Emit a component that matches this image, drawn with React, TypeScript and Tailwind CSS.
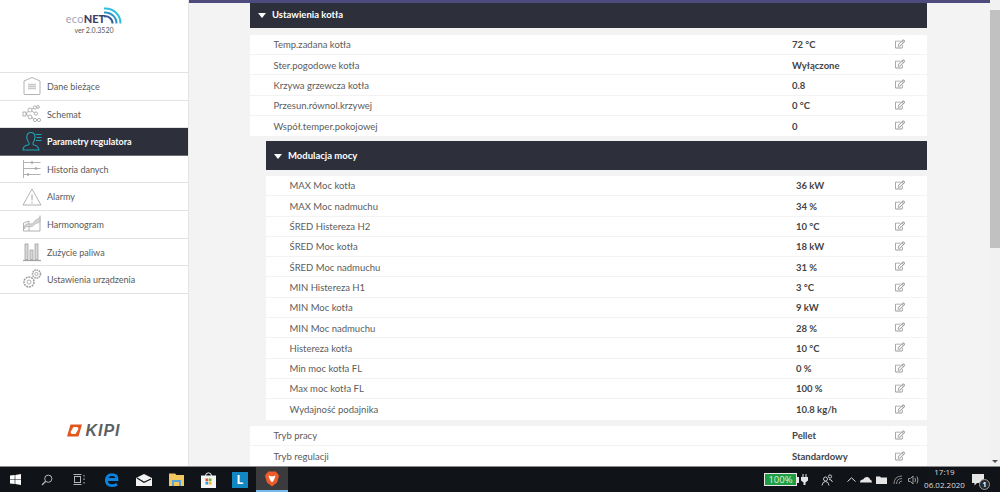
import { FaRegEdit } from "react-icons/fa";

const boilerRows = [
  ["Temp.zadana kotła", "72 °C"],
  ["Ster.pogodowe kotła", "Wyłączone"],
  ["Krzywa grzewcza kotła", "0.8"],
  ["Przesun.równol.krzywej", "0 °C"],
  ["Współ.temper.pokojowej", "0"],
];

const powerRows = [
  ["MAX Moc kotła", "36 kW"],
  ["MAX Moc nadmuchu", "34 %"],
  ["ŚRED Histereza H2", "10 °C"],
  ["ŚRED Moc kotła", "18 kW"],
  ["ŚRED Moc nadmuchu", "31 %"],
  ["MIN Histereza H1", "3 °C"],
  ["MIN Moc kotła", "9 kW"],
  ["MIN Moc nadmuchu", "28 %"],
  ["Histereza kotła", "10 °C"],
  ["Min moc kotła FL", "0 %"],
  ["Max moc kotła FL", "100 %"],
  ["Wydajność podajnika", "10.8 kg/h"],
];

const modeRows = [
  ["Tryb pracy", "Pellet"],
  ["Tryb regulacji", "Standardowy"],
];

function NavIcon({ name, color }: { name: string; color: string }) {
  const common = { fill: "none", stroke: color, strokeWidth: 0.8 };
  return (
    <svg width="20" height="20" viewBox="0 0 20 20" {...common}>
      {name === "dane" && (
        <>
          <path d="M2 5 L10 1.5 L18 5 V17.5 Q18 18.5 17 18.5 H3 Q2 18.5 2 17.5 Z" />
          <path d="M6 8.5h8M6 10.5h8M6 12.5h8" strokeWidth="1.4" stroke="#c8c8c8" />
        </>
      )}
      {name === "schemat" && (
        <>
          <rect x="1" y="8" width="3" height="4" />
          <circle cx="8" cy="6" r="2" />
          <circle cx="8" cy="13" r="2" />
          <circle cx="13" cy="3.5" r="1.6" />
          <circle cx="16" cy="3" r="1.4" />
          <circle cx="14" cy="9.5" r="1.6" />
          <circle cx="13" cy="16" r="1.6" />
          <circle cx="17" cy="16" r="1.6" />
          <path d="M4 10 L6.5 7M4 10 L6.5 12M9.6 5 L11.6 4M9.8 7 L12.6 9M9.8 13 L11.5 15.4" />
        </>
      )}
      {name === "parametry" && (
        <>
          <path d="M1 19 Q1 14.5 6 14 Q7.6 13.4 7 12 Q4.8 9.5 4.8 6 Q5 1.5 9 1.5 Q12.5 1.5 13 5.5 Q13 9.5 11 12 Q10.5 13.5 12 14 Q16 14.5 17 19 Z" strokeWidth="1.1" />
          <path d="M13.5 3.5h6M14.5 6.5h5M14 9.5h5.5" strokeWidth="1.1" />
        </>
      )}
      {name === "historia" && (
        <>
          <path d="M1.5 1v18M1.5 3.5h17M1.5 9.5h17M1.5 15.5h17" />
          <circle cx="10" cy="3.5" r="1" />
          <circle cx="14" cy="9.5" r="1" />
          <circle cx="6" cy="15.5" r="1" />
        </>
      )}
      {name === "alarmy" && (
        <>
          <path d="M10 2 L19 18 H1 Z" />
          <path d="M10 7.5v6M10 15v1.4" strokeWidth="1" />
        </>
      )}
      {name === "harmonogram" && (
        <>
          <path d="M1.5 9 L7 7 V17 H1.5 Z M7 17 H18 V1.5" />
          <path d="M2 12 Q5 8.5 8 10 Q11 10.5 13 6.5 L18 3.5 V8 L13 10 Q10 14 7 12.5 Q4 12 2 15 Z" fill="#d5d5d5" strokeWidth="0.5" />
        </>
      )}
      {name === "zuzycie" && (
        <>
          <rect x="3" y="2" width="3" height="15.5" fill="#d8d8d8" />
          <rect x="8" y="8" width="3" height="9.5" fill="#d8d8d8" />
          <rect x="13" y="2" width="3" height="15.5" fill="#d8d8d8" />
          <path d="M1 18.5h18" strokeWidth="1.2" />
        </>
      )}
      {name === "ustawienia" && (
        <>
          <circle cx="7" cy="13" r="5" strokeDasharray="2 0.8" strokeWidth="1.6" />
          <circle cx="7" cy="13" r="2" />
          <circle cx="14.5" cy="5" r="4" strokeDasharray="1.6 0.7" strokeWidth="1.5" />
          <circle cx="14.5" cy="5" r="1.6" />
        </>
      )}
    </svg>
  );
}

const navItems = [
  { name: "dane", label: "Dane bieżące" },
  { name: "schemat", label: "Schemat" },
  { name: "parametry", label: "Parametry regulatora", active: true },
  { name: "historia", label: "Historia danych" },
  { name: "alarmy", label: "Alarmy" },
  { name: "harmonogram", label: "Harmonogram" },
  { name: "zuzycie", label: "Zużycie paliwa" },
  { name: "ustawienia", label: "Ustawienia urządzenia" },
];

function Sidebar() {
  return (
    <div className="w-[189px] shrink-0 bg-white border-r border-[#e4e4e4] flex flex-col">
      {/* logo */}
      <div className="h-[72px] flex flex-col items-center pt-[5px]">
        <div className="flex items-end h-[20px]">
          <span className="text-[11px] leading-[12px] text-[#a5a3b8] tracking-[0.2px]">eco</span>
          <span className="text-[11px] leading-[12px] font-black text-[#3d4066]">NET</span>
          <svg width="19" height="18" viewBox="0 0 19 18" className="-ml-[2px] mb-[1px]" fill="none">
            <path d="M1 2.5 A15 15 0 0 1 17.5 17.5" stroke="#2fc0e0" strokeWidth="2" />
            <path d="M1 6.5 A11 11 0 0 1 13.5 17.5" stroke="#2a96c8" strokeWidth="2" />
            <path d="M1 10.5 A7 7 0 0 1 9.5 17.5" stroke="#34588f" strokeWidth="2" />
          </svg>
        </div>
        <span className="text-[7px] leading-[10px] text-[#555]">ver 2.0.3520</span>
      </div>

      <div className="border-t border-[#e2e2e2]">
        {navItems.map((item) => (
          <div
            key={item.name}
            className={`h-[27.6px] flex items-center pl-[22px] gap-[5px] border-b ${
              item.active
                ? "bg-[#2d303b] border-[#6b6d75] text-white font-bold"
                : "bg-white border-[#e2e2e2] text-[#5a5a5a]"
            }`}
          >
            <NavIcon name={item.name} color={item.active ? "#1fa3b3" : "#a0a0a0"} />
            <span className="text-[9px] pt-[1px]">{item.label}</span>
          </div>
        ))}
      </div>

      <div className="flex-1 flex items-end justify-center pb-[28px]">
        <div className="flex items-center gap-[3px]">
          <svg width="15" height="13" viewBox="0 0 15 13">
            <path d="M3.5 0.5 H15 L11.5 12.5 H0 Z" fill="#e2571e" />
            <path d="M6.5 3 H10.5 L11.5 5 L8.5 10 H4.5 L3.5 8 Z" fill="#fff" />
          </svg>
          <span className="text-[16px] leading-[15px] font-black italic text-[#5d5f63] tracking-[1px] font-['Liberation_Sans',sans-serif]">
            KIPI
          </span>
        </div>
      </div>
    </div>
  );
}

function Row({ label, value, nested }: { label: string; value: string; nested?: boolean }) {
  return (
    <div className={`flex items-center bg-white border-b border-[#f3f3f3] last:border-b-0 text-[9.5px] ${nested ? "h-[20.3px]" : "h-[20.2px]"}`}>
      <span className={`text-[#5c5c5c] pt-[2px] ${nested ? "w-[530px] pl-[23.5px]" : "w-[542px] pl-[23.5px]"}`}>{label}</span>
      <span className={`text-[#444] font-bold pt-[2px] ${nested ? "w-[99px]" : "w-[102.5px]"}`}>{value}</span>
      <FaRegEdit className="text-[10px] text-[#999] -mt-[1px]" />
    </div>
  );
}

function SectionHeader({ title, className }: { title: string; className: string }) {
  return (
    <div className={`bg-[#2d303b] text-white font-bold text-[9.5px] flex items-center ${className}`}>
      <span className="w-0 h-0 border-x-[4px] border-x-transparent border-t-[5px] border-t-white mr-[6px]" />
      {title}
    </div>
  );
}

function Content() {
  return (
    <div className="flex-1 min-w-0 bg-[#f3f3f3] overflow-hidden">
      <div className="h-[3px] bg-[#4d4a7d]" />
      <div className="ml-[61px] w-[677px]">
        <SectionHeader title="Ustawienia kotła" className="h-[25px] pl-[8px]" />
        <div className="mt-[7px]">
          {boilerRows.map(([label, value]) => (
            <Row key={label} label={label} value={value} />
          ))}
        </div>
        <div className="ml-[16px] mt-[5px]">
          <SectionHeader title="Modulacja mocy" className="h-[29px] pl-[8px] pt-[2px]" />
          <div className="mt-[6px]">
            {powerRows.map(([label, value]) => (
              <Row key={label} label={label} value={value} nested />
            ))}
          </div>
        </div>
        <div className="mt-[6.5px]">
          {modeRows.map(([label, value]) => (
            <Row key={label} label={label} value={value} />
          ))}
        </div>
      </div>
    </div>
  );
}

function Scrollbar() {
  return (
    <div className="w-[10px] shrink-0 bg-[#f1f1f1] flex flex-col">
      <div className="h-[10px]" />
      <div className="h-[238px] bg-[#c1c1c1]" />
      <div className="flex-1 flex items-end justify-center pb-[3px]">
        <span className="w-0 h-0 border-x-[3px] border-x-transparent border-t-[3px] border-t-[#505050]" />
      </div>
    </div>
  );
}

function TaskButton({ children, active }: { children: React.ReactNode; active?: boolean }) {
  return (
    <div
      className={`w-[32px] h-full flex items-center justify-center ${
        active ? "bg-[#3b3b3d] border-b-2 border-[#76b9ed]" : ""
      }`}
    >
      {children}
    </div>
  );
}

function Taskbar() {
  return (
    <div className="h-[26px] shrink-0 bg-[#101318] border-t border-[#8a8a8a] flex items-center text-white font-['Open_Sans',sans-serif]">
      <div className="flex h-full -ml-[1px]">
        <TaskButton>
          <svg width="11" height="11" viewBox="0 0 11 11" fill="#fff">
            <path d="M0 1.6 L4.7 1 V5.2 H0 Z M5.3 0.9 L11 0 V5.2 H5.3 Z M0 5.8 H4.7 V10 L0 9.4 Z M5.3 5.8 H11 V11 L5.3 10.1 Z" />
          </svg>
        </TaskButton>
        <TaskButton>
          <svg width="12" height="12" viewBox="0 0 12 12" fill="none" stroke="#b5b5b5" strokeWidth="1">
            <circle cx="7.3" cy="4.7" r="3.6" />
            <path d="M4.7 7.3 L1 11" strokeWidth="1.3" />
          </svg>
        </TaskButton>
        <TaskButton>
          <svg width="12" height="11" viewBox="0 0 12 11" fill="none" stroke="#b5b5b5" strokeWidth="1">
            <path d="M0.5 0.5h8M0.5 10.5h8" />
            <rect x="1.5" y="2.5" width="6" height="6" />
            <path d="M11 1v1.6M11 4.4v1.6M11 8v1.6" />
          </svg>
        </TaskButton>
        <div className="w-[1px]" />
        <TaskButton>
          <svg width="14" height="14" viewBox="0 0 14 14" fill="none" stroke="#0a84e0" strokeWidth="2.8">
            <path d="M2 6.5 H12 Q12 1.6 7 1.6 Q1.4 1.6 1.4 7.6 Q1.4 12.6 7 12.6 Q9.8 12.6 12 11.2" />
          </svg>
        </TaskButton>
        <TaskButton>
          <svg width="16" height="12" viewBox="0 0 16 12">
            <path d="M0 4 L8 0 L16 4 V12 H0 Z" fill="#f2f2f2" />
            <path d="M1 4 L8 8.2 L15 5" fill="none" stroke="#101318" strokeWidth="1.2" />
          </svg>
        </TaskButton>
        <TaskButton>
          <svg width="15" height="13" viewBox="0 0 15 13">
            <path d="M0 0.5 H6 L7.5 2 H15 V13 H0 Z" fill="#f1c75e" />
            <rect x="3" y="7" width="9" height="6" fill="#5aa6d8" />
            <rect x="5" y="9" width="5" height="4" fill="#f1c75e" />
          </svg>
        </TaskButton>
        <TaskButton>
          <svg width="15" height="16" viewBox="0 0 15 16">
            <path d="M4.5 4 Q4.5 0.8 7.5 0.8 Q10.5 0.8 10.5 4" fill="none" stroke="#eee" strokeWidth="1" />
            <rect x="0" y="3.5" width="15" height="12.5" fill="#f4f4f4" />
            <rect x="4.5" y="6.5" width="2.7" height="2.7" fill="#e94f2f" />
            <rect x="7.8" y="6.5" width="2.7" height="2.7" fill="#6fb62e" />
            <rect x="4.5" y="9.8" width="2.7" height="2.7" fill="#2a9be0" />
            <rect x="7.8" y="9.8" width="2.7" height="2.7" fill="#f6b81f" />
          </svg>
        </TaskButton>
        <TaskButton>
          <div className="w-[16px] h-[16px] bg-[#1187c4] flex items-center justify-center text-[12px] leading-none font-bold text-white">
            L
          </div>
        </TaskButton>
        <TaskButton active>
          <svg width="14" height="16" viewBox="0 0 14 16">
            <path d="M3.5 0.5 H10.5 L13 3 L14 5 L12 11.5 L7 15.5 L2 11.5 L0 5 L1 3 Z" fill="#ee5a2a" />
            <path d="M3.5 4.5 L7 5.5 L10.5 4.5 L9 9 L7 11.5 L5 9 Z" fill="#fff" />
          </svg>
        </TaskButton>
      </div>

      <div className="ml-auto flex items-center h-full pr-[10px]">
        <div className="flex items-center mr-[2px]">
          <div className="w-[33px] h-[13px] bg-[#1f9d45] border border-[#e8e8e8] text-[9.5px] leading-[11px] text-center text-[#d9f5df]">
            100%
          </div>
          <div className="w-[1.5px] h-[6px] bg-[#e8e8e8]" />
        </div>
        <svg width="7" height="11" viewBox="0 0 7 11" fill="#e5e5e5" className="mr-[13.5px]">
          <path d="M1.5 0h1v3h2V0h1v3H7v3.5L4.5 8.5V11h-2V8.5L0 6.5V3h1.5z" />
        </svg>
        <svg width="12" height="12" viewBox="0 0 12 12" fill="none" stroke="#ddd" strokeWidth="0.9" className="mr-[13.5px]">
          <circle cx="4.5" cy="5" r="2" />
          <path d="M1 11.5 Q1.5 7.5 4.5 7.5 Q7.5 7.5 8 11.5" />
          <circle cx="9" cy="2.5" r="1.6" />
          <path d="M8 5.5 Q10.5 5 11.5 8" />
        </svg>
        <svg width="9" height="5" viewBox="0 0 9 5" fill="none" stroke="#ddd" strokeWidth="1" className="mr-[4.5px]">
          <path d="M0.5 4.5 L4.5 0.8 L8.5 4.5" />
        </svg>
        <svg width="12" height="7" viewBox="0 0 12 7" fill="#e5e5e5" className="mr-[3.5px]">
          <path d="M0 6.5 Q0 3.5 3 3.5 Q4.5 0.5 7.5 1 Q10 1.5 10 3.5 Q12 4 12 6.5 Z" />
        </svg>
        <svg width="11" height="8" viewBox="0 0 11 8" fill="#e5e5e5" className="mr-[6.5px]">
          <path d="M0 0.5 H4 L5 1.5 H11 V8 H0 Z" />
        </svg>
        <svg width="10" height="10" viewBox="0 0 10 10" fill="none" stroke="#a5a5a5" strokeWidth="0.8" className="mr-[4.5px]">
          <path d="M1 9 Q1 1 9 1M3.5 9 Q3.5 3.5 9 3.5M6 9 Q6 6 9 6" />
        </svg>
        <svg width="11" height="10" viewBox="0 0 11 10" fill="none" stroke="#bbb" strokeWidth="0.8" className="mr-[4.5px]">
          <path d="M0.5 3.5 H2.5 L5 1 V9 L2.5 6.5 H0.5 Z" />
          <path d="M7 3 Q8 5 7 7M9 1.5 Q11 5 9 8.5" />
        </svg>
        <div className="w-[43px] mb-[4px] flex flex-col items-center text-[8px] leading-[13px] text-[#dcdcdc]">
          <span>17:19</span>
          <span>06.02.2020</span>
        </div>
        <div className="relative w-[24px] h-full flex items-center justify-center">
          <svg width="12" height="12" viewBox="0 0 12 12" fill="#e5e5e5">
            <path d="M0 0 H12 V9 H5 L2.5 11.5 V9 H0 Z" />
          </svg>
          <span className="absolute right-[0px] bottom-[2px] w-[11px] h-[11px] rounded-full bg-[#2a2a2c] border border-[#999] text-[7px] leading-[9px] text-center font-bold text-white">
            1
          </span>
        </div>
      </div>
    </div>
  );
}

export default function App() {
  return (
    <div className="w-[1000px] h-[492px] flex flex-col overflow-hidden font-['Lato',sans-serif]">
      <div className="flex-1 min-h-0 flex">
        <Sidebar />
        <Content />
        <Scrollbar />
      </div>
      <Taskbar />
    </div>
  );
}
